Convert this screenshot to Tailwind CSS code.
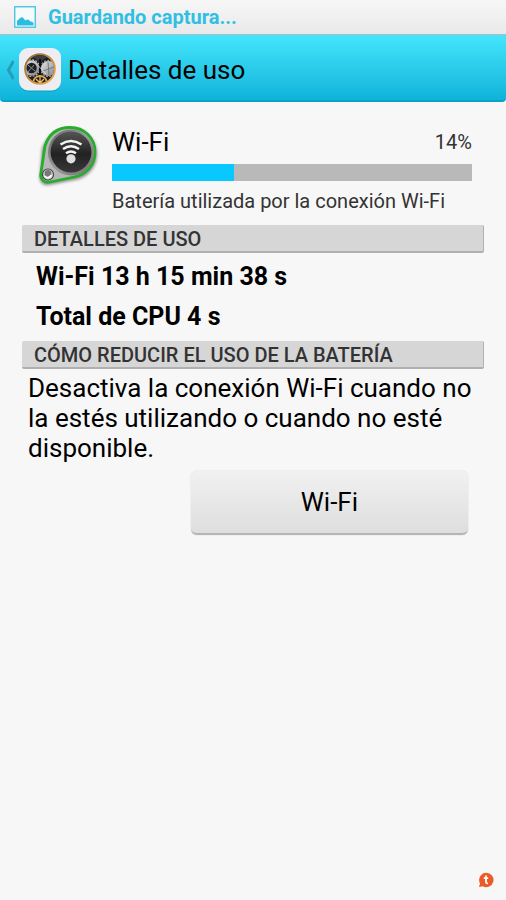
<!DOCTYPE html>
<html lang="es">
<head>
<meta charset="utf-8">
<meta name="viewport" content="width=device-width, initial-scale=1">
<title>Detalles de uso</title>
<script src="https://cdn.jsdelivr.net/npm/@tailwindcss/browser@4"></script>
</head>
<body class="flex min-h-screen flex-col bg-[#f7f7f7] font-[Roboto,sans-serif] text-black">
  <div class="flex h-[35px] items-center gap-3 border-b border-[#b9b9b9] bg-linear-to-b from-[#f7f7f7] to-[#e9e9e9] px-3.5" role="status">
    <svg class="size-[22px] shrink-0" viewBox="0 0 22 22" aria-hidden="true">
      <rect x="0.75" y="0.75" width="20.5" height="20.5" fill="#f5fafb" stroke="#3cc3e0" stroke-width="1.3"/>
      <path d="M3 19.500v-4.500l2.500-2.500 1.800-1.300 1.500.3 2.700 3 1.600-1 1.600.2 2 2 1.200-.2 1.600 1.600v2.400z" fill="#2bbde0"/>
    </svg>
    <span class="text-[20px] leading-6 font-bold text-[#30bfe3]">Guardando captura...</span>
  </div>

  <header class="flex h-[67px] items-center gap-1.5 rounded-b border-b-2 border-[#0aa3c8] bg-linear-to-b from-[#42e6fc] to-[#0cb3da] px-1.5 pt-1">
    <button type="button" class="flex items-center gap-1" aria-label="Atrás">
      <svg class="h-6 w-2 shrink-0" viewBox="0 0 8 24" fill="none" aria-hidden="true">
        <path d="M7.500 3L2.500 12l5 9" stroke="#259db5" stroke-width="3"/>
      </svg>
      <svg class="size-[44px] shrink-0" viewBox="0 0 44 44" aria-hidden="true">
        <defs>
          <linearGradient id="gold" x1="0" y1="0" x2="1" y2="1"><stop stop-color="#8b6a38"/><stop offset=".5" stop-color="#c48b39"/><stop offset="1" stop-color="#edb65c"/></linearGradient>
          <linearGradient id="steel" x1="0" y1="0" x2="1" y2="1"><stop stop-color="#e2e2e5"/><stop offset="1" stop-color="#85878c"/></linearGradient>
          <clipPath id="dial"><circle cx="22" cy="21" r="14"/></clipPath>
        </defs>
        <rect x="1" y="2" width="42" height="41.500" rx="9" fill="#087e9b" opacity=".45"/>
        <rect x="1" y="0" width="42" height="42.500" rx="9" fill="#eeeef2"/>
        <circle cx="22" cy="21" r="14.800" fill="#1d1e21" stroke="url(#gold)" stroke-width="2"/>
        <g clip-path="url(#dial)">
          <path d="M15 9l7 5 7-5-3-3h-8z" fill="#3c3f45"/>
          <circle cx="13.500" cy="20" r="6.500" fill="none" stroke="url(#steel)" stroke-width="2.600"/>
          <circle cx="13.500" cy="20" r="8.300" fill="none" stroke="#b4b5b9" stroke-width="1.300" stroke-dasharray="1.800 1.500"/>
          <path d="M10 17l7 6M10 24l6-7" stroke="#8f9196" stroke-width="1"/>
          <path d="M30.500 13a7.500 7.500 0 1 1-.1 0z" fill="url(#steel)"/>
          <circle cx="30.500" cy="20.500" r="8" fill="none" stroke="#9c9da2" stroke-width="1.300" stroke-dasharray="1.800 1.500"/>
          <path d="M25 23l11-4M30 14l1 13" stroke="#66686d" stroke-width=".8"/>
          <path d="M15.500 33.500a6.500 5.500 0 0 1 13 0" fill="none" stroke="#e2a84d" stroke-width="1.800"/>
          <path d="M22 35v-6M22 35l-4-4M22 35l4-4" stroke="#efbf6b" stroke-width="1.300"/>
          <path d="M22 11v16" stroke="#111" stroke-width="2"/>
          <path d="M15 12l13 14" stroke="#d5d5d8" stroke-width=".9"/>
        </g>
      </svg>
    </button>
    <h1 class="text-[26px] leading-8">Detalles de uso</h1>
  </header>

  <main class="flex flex-col px-[22px] pt-[22px]">
    <section class="flex gap-3 px-3">
      <svg class="h-[68px] w-[66px] shrink-0" viewBox="34 124 66 68" aria-hidden="true">
        <defs>
          <linearGradient id="face" x1="0" y1="0" x2="0" y2="1"><stop stop-color="#555"/><stop offset=".55" stop-color="#222"/><stop offset="1" stop-color="#383838"/></linearGradient>
          <linearGradient id="rim" x1="0" y1="0" x2="1" y2="1"><stop stop-color="#666"/><stop offset=".5" stop-color="#999"/><stop offset="1" stop-color="#707070"/></linearGradient>
          <filter id="soft" x="-20%" y="-20%" width="140%" height="140%"><feGaussianBlur stdDeviation="1.500"/></filter>
        </defs>
        <path d="M42 148C48 134 58 128 70 128c15 0 27 11 27 26 0 14-10 24-22 26l-26 5c-6 1-11-3-9-11z" fill="#444" opacity=".6" filter="url(#soft)"/>
        <path d="M45 146C49 133.500 58 127.500 70 127.500c14.500 0 25 10.500 25 24.500 0 13-8.500 22.500-21 25L50 182c-6 1.200-10.500-3-9-9.500z" fill="#b5b8b6" stroke="#25ad2b" stroke-width="2.800"/>
        <circle cx="71" cy="152.500" r="23" fill="url(#rim)"/>
        <circle cx="71" cy="152" r="20.500" fill="url(#face)"/>
        <g fill="none" stroke="#f4f4f4" stroke-width="2.400">
          <path d="M60.500 144.500q10.500-7 21 0"/>
          <path d="M63 149q8-5.500 16 0"/>
          <path d="M66 153.300q5-3.500 10 0"/>
        </g>
        <circle cx="71" cy="158.800" r="4.600" fill="#dedede"/>
        <circle cx="48" cy="174.500" r="5.500" fill="#ddd" stroke="#444" stroke-width="1.200"/>
        <circle cx="48" cy="173.500" r="3.500" fill="#777"/>
        <path d="M44.500 176q3.500 3.500 7-1" stroke="#fff" stroke-width="1.500" fill="none"/>
      </svg>
      <div class="flex min-w-0 flex-1 flex-col">
        <div class="flex items-center justify-between pt-0.5">
          <h2 class="text-[26px] leading-8">Wi-Fi</h2>
          <span class="text-[20px] leading-6 text-[#333]">14%</span>
        </div>
        <div class="mt-1.5 h-[17px] bg-[#b9b9b9]" role="progressbar" aria-label="Uso de batería" aria-valuenow="14" aria-valuemin="0" aria-valuemax="100">
          <div class="h-full bg-[#08c8fd]" style="width:34%"></div>
        </div>
        <p class="mt-2 text-[20px] leading-6 text-[#333]">Batería utilizada por la conexión Wi-Fi</p>
      </div>
    </section>

    <h2 class="mt-3 rounded-xs border-r border-b-2 border-[#b0b0b0] bg-[#d6d6d6] px-3 pt-0.5 text-[20px] leading-6 font-medium text-[#333]">DETALLES DE USO</h2>
    <ul class="px-3.5 pt-1 text-[25px] leading-10 font-bold">
      <li>Wi-Fi 13 h 15 min 38 s</li>
      <li>Total de CPU 4 s</li>
    </ul>
    <h2 class="mt-1 rounded-xs border-r border-b-2 border-[#b0b0b0] bg-[#d6d6d6] px-3 pt-0.5 text-[20px] leading-6 font-medium text-[#333]">CÓMO REDUCIR EL USO DE LA BATERÍA</h2>
    <p class="mt-1 px-1.5 text-[26px] leading-[30px]">Desactiva la conexión Wi-Fi cuando no la estés utilizando o cuando no esté disponible.</p>
    <button type="button" class="mt-2 mr-4 h-16 w-3/5 self-end rounded-md border-b-2 border-[#b5b5b5] bg-linear-to-b from-[#f1f1f1] to-[#dedede] text-[26px] leading-8 shadow-[0_0_1px_#aaa]">Wi-Fi</button>
  </main>

  <footer class="mt-auto flex justify-end px-3 pb-3">
    <svg class="size-4" viewBox="0 0 16 16" role="img" aria-label="t">
      <path d="M8.200.8a7.200 7.200 0 1 1-3.400 13.500l-3.800.7 1-3.500A7.200 7.200 0 0 1 8.200.8z" fill="#ec5a28"/>
      <path d="M8 3.500v6.500q0 1.500 2 1.300M5.800 6.200h4.400" stroke="#fff" stroke-width="1.800" fill="none"/>
    </svg>
  </footer>
</body>
</html>
